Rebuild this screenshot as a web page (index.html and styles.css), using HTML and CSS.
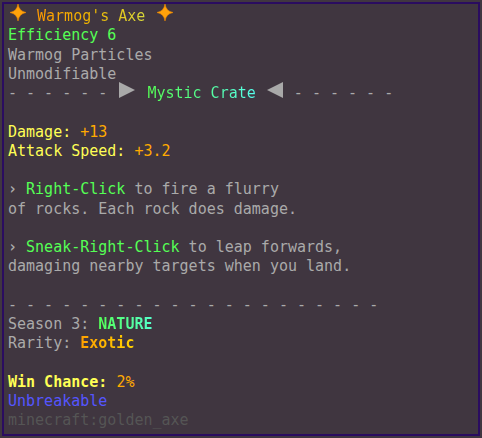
FILE: index.html
```html
<!DOCTYPE html>
<html>
<head>
<meta charset="utf-8">
<link rel="stylesheet" href="styles.css">
</head>
<body>
<div class="tip">
  <div class="line"><span class="star"><svg width="20" height="17" viewBox="0 0 20 17"><path d="M10 0 Q11 7.2 18 8.5 Q11 9.8 10 17 Q9 9.8 2 8.5 Q9 7.2 10 0Z" fill="#ffa20a" stroke="#f08a00" stroke-width="0.6"/></svg></span> <span class="grad-title">Warmog's Axe</span> <span class="star"><svg width="20" height="17" viewBox="0 0 20 17"><path d="M11 0 Q12 7.2 19 8.5 Q12 9.8 11 17 Q10 9.8 3 8.5 Q10 7.2 11 0Z" fill="#ffa20a" stroke="#f08a00" stroke-width="0.6"/></svg></span></div>
  <div class="line green">Efficiency 6</div>
  <div class="line gray">Warmog Particles</div>
  <div class="line gray">Unmodifiable</div>
  <div class="line gray">- - - - - - <span class="tri-r"><svg width="22" height="16" viewBox="0 0 22 16"><polygon points="3,0 19,8 3,16" fill="#a9a9a9"/></svg></span> <span class="grad-crate">Mystic Crate</span> <span class="tri-l"><svg width="20" height="16" viewBox="0 0 20 16"><polygon points="18,0 2,8 18,16" fill="#a9a9a9"/></svg></span> - - - - - -</div>
  <div class="line">&nbsp;</div>
  <div class="line"><span class="yellow">Damage:</span> <span class="gold">+13</span></div>
  <div class="line"><span class="yellow">Attack Speed:</span> <span class="gold">+3.2</span></div>
  <div class="line">&nbsp;</div>
  <div class="line gray"><span class="chev">›</span> <span class="green">Right-Click</span> to fire a flurry</div>
  <div class="line gray">of rocks. Each rock does damage.</div>
  <div class="line">&nbsp;</div>
  <div class="line gray"><span class="chev">›</span> <span class="green">Sneak-Right-Click</span> to leap forwards,</div>
  <div class="line gray">damaging nearby targets when you land.</div>
  <div class="line">&nbsp;</div>
  <div class="line gray">- - - - - - - - - - - - - - - - - - - - -</div>
  <div class="line gray">Season 3: <span class="bold grad-nature">NATURE</span></div>
  <div class="line gray">Rarity: <span class="bold grad-exotic">Exotic</span></div>
  <div class="line">&nbsp;</div>
  <div class="line"><span class="bold yellow">Win Chance:</span> <span class="gold">2%</span></div>
  <div class="line blue">Unbreakable</div>
  <div class="line dark">minecraft:golden_axe</div>
</div>
</body>
</html>
```
FILE: styles.css
```css
html, body {
  margin: 0;
  padding: 0;
  background: #403640;
}
body {
  width: 482px;
  height: 438px;
  padding: 2px;
  box-sizing: border-box;
}
.tip {
  box-sizing: border-box;
  height: 100%;
  border: 2px solid #2a0c60;
  padding: 3px 4px;
  font-family: "DejaVu Sans Mono", "Liberation Mono", monospace;
  font-size: 15px;
  color: #aaaaaa;
}
.line {
  height: 19.25px;
  line-height: 19.25px;
  white-space: pre;
}
.star svg {
  display: inline-block;
  vertical-align: baseline;
  margin-top: -3px;
}
.tri-r svg, .tri-l svg {
  display: inline-block;
  vertical-align: baseline;
  margin-top: -2px;
}
.gray { color: #aaaaaa; }
.green { color: #55ff55; }
.yellow { color: #ffff55; }
.gold { color: #ffaa00; }
.blue { color: #5555ff; }
.dark { color: #555555; }
.bold { font-weight: bold; }
.chev { font-weight: bold; }
.grad-title, .grad-crate, .grad-nature, .grad-exotic {
  -webkit-background-clip: text;
  background-clip: text;
  color: transparent;
}
.grad-title {
  background-image: linear-gradient(90deg, #ff9a00, #f0b800 50%, #d8d83a);
}
.grad-crate {
  background-image: linear-gradient(90deg, #55ff55, #55ff88 45%, #55ffee);
}
.grad-nature {
  background-image: linear-gradient(90deg, #55ff55, #55ffcc);
}
.grad-exotic {
  background-image: linear-gradient(90deg, #ffa000, #ffd200);
}
```
